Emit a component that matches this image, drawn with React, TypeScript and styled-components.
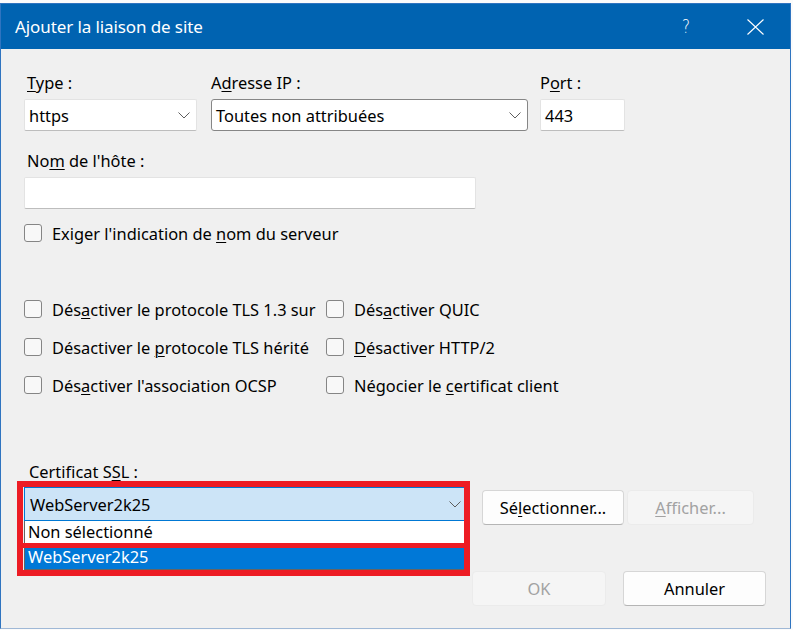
import React from "react";
import styled, { createGlobalStyle } from "styled-components";

const FONT = `"Noto Sans", "Open Sans", "DejaVu Sans", sans-serif`;

const GlobalStyle = createGlobalStyle`
  html, body { margin: 0; padding: 0; background: #f7f7f7; }
  #root { width: 793px; height: 630px; overflow: hidden; }
  * { box-sizing: border-box; }
`;

const Page = styled.div`
  width: 793px;
  height: 630px;
  padding-top: 3px;
  background: #fbfbfb;
  font-family: ${FONT};
`;

const Dialog = styled.div`
  width: 791px;
  height: 626px;
  display: flex;
  flex-direction: column;
  border: 1px solid #2f74c0;
  border-bottom-color: #9fb8d6;
  background: #f0f0f0;
`;

const TitleBar = styled.div`
  height: 45px;
  flex: none;
  display: flex;
  align-items: center;
  background: #0063b1;
  color: #fff;
  padding: 0 26px 0 14px;
`;

const Title = styled.div`
  font-size: 17px;
  letter-spacing: -0.1px;
  margin-top: -1px;
`;

const Controls = styled.div`
  margin-left: auto;
  display: flex;
  align-items: center;
  gap: 56px;
`;

const Help = styled.span`
  font-size: 19px;
  font-weight: 300;
  line-height: 1;
  font-family: "DejaVu Sans", sans-serif;
  transform: scaleX(0.8);
`;

const Body = styled.div`
  flex: 1;
  display: flex;
  flex-direction: column;
  padding: 24px 0 0 23px;
  color: #000;
  font-size: 16.4px;
`;

const TopRow = styled.div`
  display: flex;
  align-items: flex-start;
`;

const Field = styled.div<{ $w: number; $gap?: number }>`
  width: ${(p) => p.$w}px;
  margin-left: ${(p) => p.$gap ?? 0}px;
  display: flex;
  flex-direction: column;
`;

const Label = styled.div<{ $indent?: number }>`
  height: 20px;
  line-height: 20px;
  padding-left: ${(p) => p.$indent ?? 3}px;
  margin-bottom: 6px;
  white-space: nowrap;
`;

const Key = styled.span`
  text-decoration: underline;
  text-underline-offset: 2px;
  text-decoration-thickness: 1px;
`;

const Box = styled.div<{ $dark?: boolean }>`
  height: 32px;
  background: #fff;
  border: 1px solid ${(p) => (p.$dark ? "#868686" : "#e3e3e3")};
  border-bottom-color: ${(p) => (p.$dark ? "#868686" : "#bdbdbd")};
  border-radius: ${(p) => (p.$dark ? 3 : 2)}px;
  display: flex;
  align-items: center;
  padding: 0 6px 0 4px;
  white-space: nowrap;
`;

const Chevron = styled.svg`
  margin-left: auto;
  flex: none;
`;

const ChevronIcon = () => (
  <Chevron width="12" height="7" viewBox="0 0 12 7">
    <polyline points="0.5,0.5 6,6 11.5,0.5" fill="none" stroke="#5d5d5d" strokeWidth="1" />
  </Chevron>
);

const HostLabel = styled(Label)`
  margin-top: 20px;
  margin-bottom: 6px;
`;

const CheckRow = styled.div<{ $top?: number }>`
  display: flex;
  align-items: center;
  height: 20px;
  margin-top: ${(p) => p.$top ?? 0}px;
  white-space: nowrap;
`;

const CheckText = styled.span`
  white-space: pre;
`;

const CheckBox = styled.span`
  width: 18px;
  height: 18px;
  flex: none;
  border: 1px solid #858585;
  border-radius: 3px;
  background: #f8f8f8;
  margin-right: 10px;
`;

const CheckGrid = styled.div`
  display: grid;
  grid-template-columns: 302px 300px;
  grid-auto-rows: 38px;
  align-items: center;
  margin-top: 47px;
`;

const CertLabel = styled(Label)`
  margin-top: 58px;
  margin-bottom: 5px;
  padding-left: 5px;
`;

const CertRow = styled.div`
  display: flex;
  align-items: flex-start;
`;

const ComboWrap = styled.div`
  position: relative;
  width: 442px;
`;

const Combo = styled.div`
  height: 34px;
  background: #cce4f7;
  border: 1px solid #0078d4;
  display: flex;
  align-items: center;
  padding: 0 4px 0 5px;
`;

const Popup = styled.div`
  position: absolute;
  top: 100%;
  left: 0;
  width: 442px;
  background: #fff;
  border: 1px solid #646464;
  border-top: none;
  z-index: 2;
`;

const Item = styled.div<{ $selected?: boolean }>`
  height: 24px;
  line-height: ${(p) => (p.$selected ? 24 : 22)}px;
  padding-left: 3px;
  background: ${(p) => (p.$selected ? "#0078d7" : "#fff")};
  color: ${(p) => (p.$selected ? "#fff" : "#000")};
`;

const Annotation = styled.div`
  position: absolute;
  left: -7px;
  top: -6px;
  width: 453px;
  height: 95px;
  border: 6px solid #ed1c24;
  z-index: 3;
  pointer-events: none;
`;

const AnnotationBar = styled.div`
  position: absolute;
  left: 0;
  right: 0;
  top: 56px;
  height: 5px;
  background: #ed1c24;
`;

const SideButtons = styled.div`
  display: flex;
  gap: 3px;
  margin: 3px 0 0 16px;
`;

const Button = styled.button<{ $w: number; $disabled?: boolean }>`
  width: ${(p) => p.$w}px;
  height: 35px;
  font-family: ${FONT};
  font-size: 16.4px;
  padding: 0;
  border-radius: 4px;
  background: ${(p) => (p.$disabled ? "#f5f5f5" : "#fdfdfd")};
  color: ${(p) => (p.$disabled ? "#a2a2a2" : "#000")};
  border: 1px solid ${(p) => (p.$disabled ? "#ebebeb" : "#d6d6d6")};
  border-bottom-color: ${(p) => (p.$disabled ? "#ebebeb" : "#b5b5b5")};
`;

const Footer = styled.div`
  display: flex;
  gap: 17px;
  margin: 46px 0 0 448px;
`;

const Close = () => (
  <svg width="17" height="16" viewBox="0 0 17 16">
    <path d="M0.5 0.5 L16.5 15.5 M16.5 0.5 L0.5 15.5" stroke="#fff" strokeWidth="1.1" />
  </svg>
);

export default function App() {
  return (
    <>
      <GlobalStyle />
      <Page>
        <Dialog>
          <TitleBar>
            <Title>Ajouter la liaison de site</Title>
            <Controls>
              <Help>?</Help>
              <Close />
            </Controls>
          </TitleBar>
          <Body>
            <TopRow>
              <Field $w={173}>
                <Label>
                  <Key>T</Key>ype :
                </Label>
                <Box>
                  https
                  <ChevronIcon />
                </Box>
              </Field>
              <Field $w={317} $gap={14}>
                <Label $indent={0}>
                  A<Key>d</Key>resse IP :
                </Label>
                <Box $dark>
                  Toutes non attribuées
                  <ChevronIcon />
                </Box>
              </Field>
              <Field $w={85} $gap={12}>
                <Label $indent={0}>
                  P<Key>o</Key>rt :
                </Label>
                <Box>443</Box>
              </Field>
            </TopRow>

            <HostLabel>
              No<Key>m</Key> de l'hôte :
            </HostLabel>
            <Field $w={452}>
              <Box />
            </Field>

            <CheckRow $top={14}>
              <CheckBox />
              <CheckText>
                Exiger l'indication de <Key>n</Key>om du serveur
              </CheckText>
            </CheckRow>

            <CheckGrid>
              <CheckRow>
                <CheckBox />
                <CheckText>
                  Dés<Key>a</Key>ctiver le protocole TLS 1.3 sur
                </CheckText>
              </CheckRow>
              <CheckRow>
                <CheckBox />
                <CheckText>
                  Dés<Key>a</Key>ctiver QUIC
                </CheckText>
              </CheckRow>
              <CheckRow>
                <CheckBox />
                <CheckText>
                  Désactiver le <Key>p</Key>rotocole TLS hérité
                </CheckText>
              </CheckRow>
              <CheckRow>
                <CheckBox />
                <CheckText>
                  <Key>D</Key>ésactiver HTTP/2
                </CheckText>
              </CheckRow>
              <CheckRow>
                <CheckBox />
                <CheckText>
                  Dés<Key>a</Key>ctiver l'association OCSP
                </CheckText>
              </CheckRow>
              <CheckRow>
                <CheckBox />
                <CheckText>
                  Négocier le <Key>c</Key>ertificat client
                </CheckText>
              </CheckRow>
            </CheckGrid>

            <CertLabel>
              Certificat S<Key>S</Key>L :
            </CertLabel>
            <CertRow>
              <ComboWrap>
                <Combo>
                  WebServer2k25
                  <ChevronIcon />
                </Combo>
                <Popup>
                  <Item>Non sélectionné</Item>
                  <Item $selected>WebServer2k25</Item>
                </Popup>
                <Annotation>
                  <AnnotationBar />
                </Annotation>
              </ComboWrap>
              <SideButtons>
                <Button $w={142}>
                  Sé<Key>l</Key>ectionner...
                </Button>
                <Button $w={127} $disabled>
                  <Key>A</Key>fficher...
                </Button>
              </SideButtons>
            </CertRow>

            <Footer>
              <Button $w={134} $disabled>
                OK
              </Button>
              <Button $w={143}>Annuler</Button>
            </Footer>
          </Body>
        </Dialog>
      </Page>
    </>
  );
}
